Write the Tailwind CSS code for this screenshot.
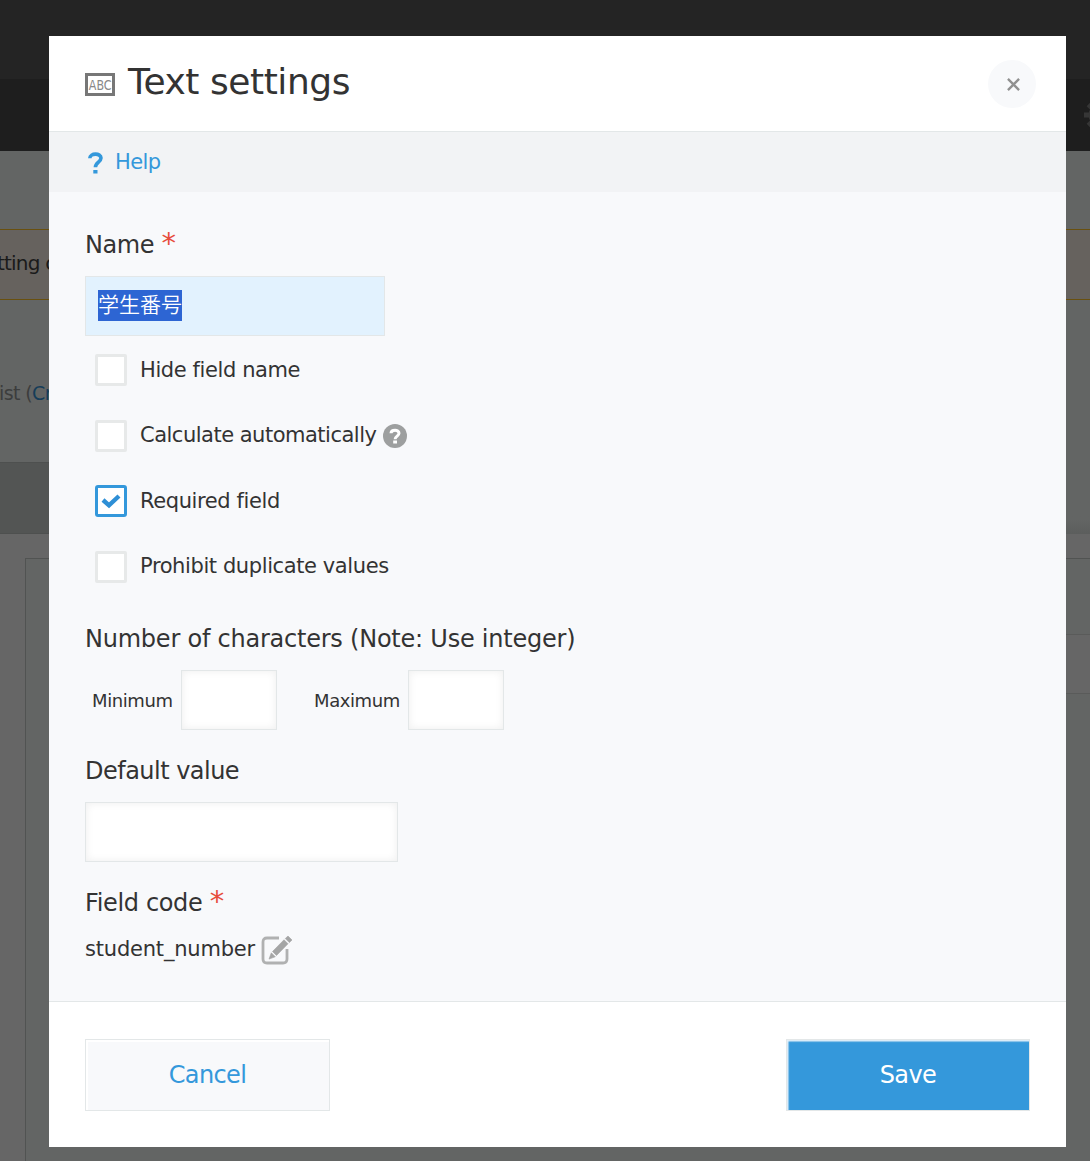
<!DOCTYPE html>
<html lang="en">
<head>
<meta charset="utf-8">
<title>Text settings</title>
<script src="https://cdn.jsdelivr.net/npm/@tailwindcss/browser@4"></script>
</head>
<body class="relative h-[1161px] w-[1090px] overflow-hidden bg-[#666666] font-['DejaVu_Sans','Noto_Sans_CJK_JP',sans-serif] text-[#333333]">
<!-- dimmed page behind the dialog -->
<div class="flex h-[1161px] flex-col">
  <div class="h-[79px] shrink-0 bg-[#242424]"></div>
  <div class="flex h-[72px] shrink-0 items-center justify-end overflow-hidden bg-[#1e1e1e]">
    <svg class="-mr-[24px] h-[30px] w-[30px]" viewBox="0 0 30 30" fill="none" stroke="#363636"><circle cx="15" cy="15" r="8" stroke-width="5"/><path d="M15 0v6M15 24v6M0 15h6M24 15h6M4.400 4.400l4.200 4.200M21.400 21.400l4.200 4.200M4.400 25.600l4.200-4.200M21.400 8.600l4.200-4.200" stroke-width="5"/></svg>
  </div>
  <div class="h-[78px] shrink-0 bg-[#636564]"></div>
  <div class="flex h-[71px] shrink-0 items-center border-y border-[#69500f] bg-[#66625e]">
    <span class="-ml-[3px] -mt-[4px] whitespace-nowrap text-[20px] leading-[30px] tracking-[-0.8px] text-[#1a1a1a]">tting of</span>
  </div>
  <div class="h-[162px] shrink-0 bg-[#636564] pt-[78px]">
    <span class="-ml-px whitespace-nowrap text-[19px] leading-[30px] tracking-[-0.6px] text-[#3c3d3d]">ist (<span class="text-[#163d59]">Create</span></span>
  </div>
  <div class="flex h-[72px] shrink-0">
    <div class="w-[600px] border-y border-[#4e504f] bg-[#535554]"></div>
    <div class="flex-1 bg-linear-to-b from-[#636564] from-80% to-[#5c5e5d]"></div>
  </div>
  <div class="h-[24px] shrink-0"></div>
  <div class="ml-[25px] flex-1 border-l border-t border-[#515352] bg-[#636564]">
    <div class="ml-[600px] mt-[75px] h-[60px] border-y border-[#5a5b5a] bg-[#666666]"></div>
  </div>
</div>

<div class="absolute left-[49px] top-[36px] flex h-[1111px] w-[1017px] flex-col bg-[#f8f9fb]">
  <header class="flex h-[96px] shrink-0 items-center justify-between border-b border-[#e3e7e8] bg-white pl-[36px] pr-[30px]">
    <div class="flex items-center">
      <svg class="mt-[2px] h-[23px] w-[30px] overflow-visible" viewBox="0 0 30 23"><rect x="1.5" y="1.5" width="27" height="20" fill="#fff" stroke="#777" stroke-width="3"/><text x="3.8" y="16.7" font-family="DejaVu Sans" font-size="14.5" fill="#888" textLength="22.8" lengthAdjust="spacingAndGlyphs">ABC</text></svg>
      <h1 class="-mt-[3px] ml-[13px] whitespace-nowrap text-[36px] leading-[48px] tracking-[-0.45px]">Text settings</h1>
    </div>
    <button class="flex h-12 w-12 items-center justify-center rounded-full bg-[#f8f9fb]">
      <svg class="ml-[2px] mt-px h-[13px] w-[13px]" viewBox="0 0 14 14" stroke="#909090" stroke-width="2.5"><path d="M1 1l12 12M13 1L1 13"/></svg>
    </button>
  </header>
  <div class="flex h-[60px] shrink-0 items-center bg-[#f2f3f5] pl-[39px] text-[#3498db]">
    <svg class="mt-[2px] h-[22px] w-[15px]" viewBox="0 0 15 22" fill="none" stroke="#3498db" stroke-width="3.6"><path d="M1.8 6.3C2 .8 13 .8 13 6.1c0 4-5.6 4.2-5.6 9.2M5.3 19.7h4.2"/></svg>
    <a class="ml-[12px] text-[21px] leading-[30px] tracking-[-0.6px]">Help</a>
  </div>

  <main class="flex-1 pl-[36px] pt-[37px]">
    <div class="h-[47px] whitespace-nowrap text-[24px] leading-[32px] tracking-[-0.4px]">Name <span class="text-[29px] leading-[20px] text-[#e74c3c]">*</span></div>
    <div class="h-[60px] w-[300px] border border-[#e3e7e8] bg-[#e2f2fe] pl-[12px] pt-[13px]">
      <div class="h-[31px] w-[84px] whitespace-nowrap bg-[#2d65d3] font-['Noto_Sans_CJK_JP',sans-serif] text-[21px] font-[350] leading-[27px] text-white">学生番号</div>
    </div>
    <div class="ml-[10px] mt-[18px] flex flex-col gap-[33.5px]">
      <label class="flex h-8 items-center"><span class="h-8 w-8 rounded-[2px] border-[3px] border-[#e7e9e9] bg-white"></span><span class="-mt-px ml-[13px] text-[21px] leading-[30px] tracking-[-0.4px]">Hide field name</span></label>
      <label class="flex h-8 items-center"><span class="h-8 w-8 rounded-[2px] border-[3px] border-[#e7e9e9] bg-white"></span><span class="-mt-[2px] ml-[13px] text-[21px] leading-[30px] tracking-[-0.5px]">Calculate automatically</span>
        <svg class="ml-[7px] h-6 w-6" viewBox="0 0 24 24"><circle cx="12" cy="12" r="12" fill="#9d9f9f"/><path d="M8 9.3c.2-4 8-4 8 0 0 2.8-3.9 2.9-3.9 6M10.2 18h3.8" fill="none" stroke="#fff" stroke-width="3"/></svg></label>
      <label class="flex h-8 items-center"><span class="flex h-8 w-8 items-center justify-center rounded-[3px] border-[3px] border-[#3498db] bg-white"><svg class="h-[16px] w-[20px]" viewBox="0 0 20 16" fill="none" stroke="#2e8fd6" stroke-width="4.4"><path d="M2 7l6 5.300L18 3"/></svg></span><span class="-mt-px ml-[13px] text-[21px] leading-[30px] tracking-[-0.4px]">Required field</span></label>
      <label class="flex h-8 items-center"><span class="h-8 w-8 rounded-[2px] border-[3px] border-[#e7e9e9] bg-white"></span><span class="-mt-[2px] ml-[13px] text-[21px] leading-[30px] tracking-[-0.4px]">Prohibit duplicate values</span></label>
    </div>
    <div class="mt-[40.5px] h-[47px] text-[24px] leading-[32px] tracking-[-0.23px]">Number of characters (Note: Use integer)</div>
    <div class="flex h-[60px] items-center text-[18px]">
      <span class="w-[96px] pl-[7px] tracking-[-0.4px]">Minimum</span>
      <span class="h-[60px] w-[96px] border border-[#e3e7e8] bg-white shadow-[inset_0_0_9px_#eeeeee]"></span>
      <span class="ml-[37px] w-[94px] tracking-[-0.4px]">Maximum</span>
      <span class="h-[60px] w-[96px] border border-[#e3e7e8] bg-white shadow-[inset_0_0_9px_#eeeeee]"></span>
    </div>
    <div class="mt-[25px] h-[47px] text-[24px] leading-[32px] tracking-[-0.52px]">Default value</div>
    <div class="h-[60px] w-[313px] border border-[#e3e7e8] bg-white shadow-[inset_0_0_9px_#eeeeee]"></div>
    <div class="mt-[25px] h-[47px] whitespace-nowrap text-[24px] leading-[32px] tracking-[-0.35px]">Field code <span class="text-[29px] leading-[20px] text-[#e74c3c]">*</span></div>
    <div class="flex h-[30px] items-center"><span class="-mt-px w-[176px] text-[21px] leading-[30px] tracking-[-0.2px]">student_number</span>
      <svg class="mt-px h-[30px] w-[31px]" viewBox="0 0 31 30"><path d="M18 3H6Q2 3 2 7v17q0 4 4 4h16q4 0 4-4V14" fill="none" stroke="#b0b1b1" stroke-width="2.8"/><path d="M11.500 16.500L23 4.800l4 4L15.500 20.500zM10.300 17.800l4 4-6.300 2.300zM24.300 3.500L27 1l4 4-2.600 2.600z" fill="#a4a5a5" stroke="#a4a5a5" stroke-width=".6"/></svg>
    </div>
  </main>

  <footer class="flex h-[146px] shrink-0 justify-between border-t border-[#e3e7e8] bg-white pl-[36px] pr-[36px] pt-[37px] text-[24px]">
    <button class="h-[72px] w-[245px] border border-[#e3e7e8] bg-[#f8f9fb] tracking-[-0.6px] text-[#3498db] shadow-[inset_2px_2px_1px_#ffffff]">Cancel</button>
    <button class="h-[72px] w-[244px] border border-[#e3e7e8] bg-[#3498db] tracking-[-0.6px] text-white shadow-[inset_1.5px_1.5px_1px_#e3f0fa]">Save</button>
  </footer>
</div>
</body>
</html>
